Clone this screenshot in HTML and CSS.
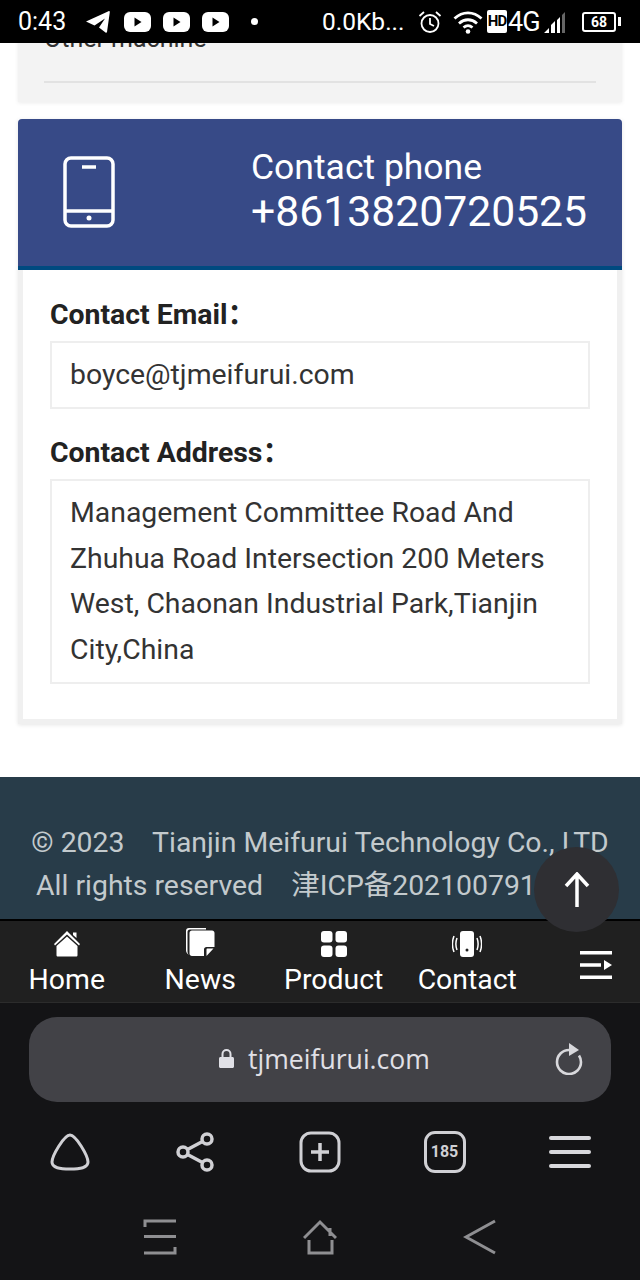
FILE: index.html
```html
<!DOCTYPE html>
<html lang="en">
  <head>
    <meta charset="UTF-8" />
    <meta name="viewport" content="width=device-width, initial-scale=1.0" />
    <link rel="stylesheet" href="styles.css">
    <title>Contact</title>
  </head>
  <body class="phone">
    <header class="status">
      <span class="status__time">0:43</span>
      <svg width="24" height="22" viewBox="0 0 24 22"><path d="M0 10.500 22.500.2c.8-.4 1.500.2 1.300 1L21 21c-.2.800-.8 1-1.500.6l-6.500-5 6-9-10.500 7z" fill="#fff"/></svg>
      <div class="status__apps">
        <svg width="27" height="20" viewBox="0 0 27 20"><rect width="27" height="20" rx="6" fill="#fff"/><path d="M10.500 5.500v9l7-4.500z" fill="#000"/></svg>
        <svg width="27" height="20" viewBox="0 0 27 20"><rect width="27" height="20" rx="6" fill="#fff"/><path d="M10.500 5.500v9l7-4.500z" fill="#000"/></svg>
        <svg width="27" height="20" viewBox="0 0 27 20"><rect width="27" height="20" rx="6" fill="#fff"/><path d="M10.500 5.500v9l7-4.500z" fill="#000"/></svg>
      </div>
      <span class="status__dot"></span>
      <span class="status__speed">0.0Kb...</span>
      <svg class="status__alarm" width="24" height="24" viewBox="0 0 24 24" fill="none" stroke="#fff" stroke-width="1.800"><circle cx="12" cy="13.500" r="8.500"/><path d="M12 8v6l4 2M1.500 6 6 2M22.500 6 18 2"/></svg>
      <svg class="status__wifi" width="30" height="24" viewBox="0 0 30 24" fill="none" stroke="#fff" stroke-width="2.800"><path d="M1.500 8.500c8-7.500 19-7.500 27 0M6 13.500c5.500-5 12.500-5 18 0M10.500 17.500c3-2.500 6-2.500 9 0"/><circle cx="15" cy="21.500" r="2.300" fill="#fff" stroke="none"/></svg>
      <span class="status__hd">HD</span>
      <span class="status__net">4G</span>
      <svg class="status__signal" width="24" height="24" viewBox="0 0 24 24"><path d="M1 23 6 18v5zM8 23v-8l4-4v12zM14 23V10l3-3v16z" fill="#fff"/><path d="M19 23V5l3-3v21z" fill="#666"/></svg>
      <div class="status__battery">
        <span class="status__battery-body">68</span>
        <span class="status__battery-cap"></span>
      </div>
    </header>

    <main class="page">
      <section class="machines">
        <p class="machines__item">Other machine</p>
      </section>

      <section class="contact">
        <div class="contact__head">
          <svg class="contact__icon" width="52" height="72" viewBox="0 0 52 72" fill="none" stroke="#fff" stroke-width="3.500"><rect x="2" y="2" width="48" height="68" rx="6"/><path d="M2 55h48M19 11h14"/><circle cx="26" cy="62" r="2.500" fill="#fff" stroke="none"/></svg>
          <div>
            <p class="contact__label">Contact phone</p>
            <p class="contact__phone">+8613820720525</p>
          </div>
        </div>
        <div class="contact__body">
          <h2 class="contact__title">Contact Email：</h2>
          <p class="contact__box">boyce@tjmeifurui.com</p>
          <h2 class="contact__title">Contact Address：</h2>
          <p class="contact__box">Management Committee Road And Zhuhua Road Intersection 200 Meters West, Chaonan Industrial Park,Tianjin City,China</p>
        </div>
      </section>

      <footer class="copyright">
        <p>© 2023 &nbsp;&nbsp; Tianjin Meifurui Technology Co., LTD</p>
        <p>All rights reserved &nbsp;&nbsp; 津ICP备2021007913号-1</p>
      </footer>
    </main>

    <div class="to-top">
      <svg width="26" height="36" viewBox="0 0 26 36" fill="none" stroke="#fff" stroke-width="3.500"><path d="M13 35V2M2 14 13 2l11 12"/></svg>
    </div>

    <nav class="site-nav">
      <a class="site-nav__item">
        <svg width="28" height="26" viewBox="0 0 28 26" fill="#fff"><path d="M14 0 27 13l-1 1.500L14 3.500 2 14.500 1 13z"/><path d="M14 5.500 24.500 15v9c0 1-.5 1.500-1.500 1.500H5c-1 0-1.500-.5-1.500-1.500v-9zM20 1.500h3.500V7L20 4z"/></svg>
        Home
      </a>
      <a class="site-nav__item">
        <svg width="30" height="30" viewBox="0 0 30 30"><path d="M4 28C1.500 26 1 25 1 23V4c0-2 1-3 3-3h17v1.500H5C3.500 2.500 2.500 3.500 2.500 5v19c0 2 .5 3 1.500 4z" fill="#fff"/><path d="M7 3.500h20c1.500 0 2.500 1 2.500 2.500v14h-8c-1.500 0-2.500 1-2.500 2.500V29H7c-1.500 0-2.500-1-2.500-2.500V6C4.500 4.500 5.500 3.500 7 3.500zM21.500 29v-6.500c0-.5.200-1 1-1h6z" fill="#fff"/></svg>
        News
      </a>
      <a class="site-nav__item">
        <svg width="26" height="26" viewBox="0 0 26 26" fill="#fff"><rect width="11.500" height="11.500" rx="3"/><rect x="14.500" width="11.500" height="11.500" rx="3"/><rect y="14.500" width="11.500" height="11.500" rx="3"/><rect x="14.500" y="14.500" width="11.500" height="11.500" rx="3"/></svg>
        Product
      </a>
      <a class="site-nav__item">
        <svg width="30" height="26" viewBox="0 0 30 26"><rect x="8" y="0" width="14" height="26" rx="3" fill="#fff"/><circle cx="15" cy="19" r="1.500" fill="#202020"/><path d="M5 7c-1.500 4-1.500 8 0 12M2 5c-2 5-2 11 0 16M25 7c1.500 4 1.500 8 0 12M28 5c2 5 2 11 0 16" fill="none" stroke="#fff" stroke-width="1.500"/></svg>
        Contact
      </a>
      <a class="site-nav__toggle">
        <svg width="32" height="28" viewBox="0 0 32 28" fill="#fff"><path d="M0 0h32v3.500H0zM0 12.300h21v3.500H0zM0 24.500h32V28H0zM24 9l8 5-8 5z"/></svg>
      </a>
    </nav>

    <div class="browser">
      <div class="browser__url">
        <svg width="15" height="20" viewBox="0 0 15 20" fill="#e0e0e6"><path d="M1.500 8h12c.8 0 1.500.7 1.500 1.500v8c0 .8-.7 1.500-1.500 1.500h-12C.7 19 0 18.300 0 17.500v-8C0 8.700.7 8 1.500 8z"/><path d="M3.500 9V5a4 4 0 0 1 8 0v4" fill="none" stroke="#e0e0e6" stroke-width="2"/></svg>
        <span class="browser__host">tjmeifurui.com</span>
        <svg class="browser__reload" width="30" height="32" viewBox="0 0 30 32" fill="none" stroke="#d8d8dc" stroke-width="2.600"><path d="M15 7a12 12 0 1 0 12 12c0-2.500-.7-4.500-2-6.500"/><path d="M15 0l10 7-10 6z" fill="#d8d8dc" stroke="none"/></svg>
      </div>
      <div class="browser__tools">
        <svg width="40" height="38" viewBox="0 0 40 38" fill="none" stroke="#d0d0d4" stroke-width="3"><path d="M20 2C26 2 38 23 38 29 38 35 30 36 20 36 10 36 2 35 2 29 2 23 14 2 20 2z"/></svg>
        <svg width="38" height="40" viewBox="0 0 38 40" fill="none" stroke="#d0d0d4" stroke-width="3.500"><circle cx="7" cy="20" r="5"/><circle cx="31" cy="7" r="5"/><circle cx="31" cy="33" r="5"/><path d="M11.500 17.500 26.500 9.500M11.500 22.500 26.500 30.500"/></svg>
        <svg width="42" height="42" viewBox="0 0 42 42" fill="none" stroke="#d0d0d4" stroke-width="3"><rect x="2" y="2" width="38" height="38" rx="10"/><path d="M21 12v18M12 21h18" stroke-width="3.500"/></svg>
        <div class="browser__tabs">185</div>
        <svg width="42" height="32" viewBox="0 0 42 32" fill="#d8d8dc"><rect width="42" height="4" rx="2"/><rect y="14" width="42" height="4" rx="2"/><rect y="28" width="42" height="4" rx="2"/></svg>
      </div>
      <div class="browser__system">
        <svg width="34" height="36" viewBox="0 0 34 36" fill="none" stroke="#8f8f92" stroke-width="3"><path d="M2 8V2h31M1 17.500h32M1 34h31v-6"/></svg>
        <svg width="34" height="36" viewBox="0 0 34 36" fill="none" stroke="#8f8f92" stroke-width="3"><path d="M1 19 17 3l16 16M27 9v8M6 21v13h23V21"/></svg>
        <svg width="34" height="36" viewBox="0 0 34 36" fill="none" stroke="#8f8f92" stroke-width="3"><path d="M32 2 3 18l29 16"/></svg>
      </div>
    </div>
  </body>
</html>
```

FILE: styles.css
```css
* {
  box-sizing: border-box;
}
p,
h2 {
  margin: 0;
}
.phone {
  margin: 0;
  width: 640px;
  height: 1280px;
  overflow: hidden;
  position: relative;
  display: flex;
  flex-direction: column;
  font-family: Roboto, "Noto Sans CJK SC", sans-serif;
  background: #fff;
}
.status {
  height: 43px;
  flex: none;
  background: #000;
  color: #fff;
  display: flex;
  align-items: center;
  padding-left: 18px;
}
.status__time {
  font-size: 25px;
  width: 68px;
}
.status__apps {
  display: flex;
  gap: 12px;
  margin-left: 14px;
}
.status__dot {
  width: 7px;
  height: 7px;
  border-radius: 50%;
  background: #fff;
  margin-left: 22px;
}
.status__speed {
  font-size: 24.500px;
  margin-left: 64px;
  width: 82px;
  white-space: nowrap;
}
.status__alarm {
  margin-left: 14px;
}
.status__wifi {
  margin-left: 11px;
}
.status__hd {
  background: #fff;
  color: #000;
  font-size: 15px;
  font-weight: 700;
  width: 20px;
  height: 23px;
  line-height: 23px;
  text-align: center;
  border-radius: 2px;
  margin-left: 4px;
  letter-spacing: -1px;
}
.status__net {
  font-size: 27px;
  width: 34px;
  margin-left: 1px;
  letter-spacing: -1px;
}
.status__signal {
  margin-left: 1px;
}
.status__battery {
  display: flex;
  align-items: center;
  gap: 2px;
  margin-left: 15px;
}
.status__battery-body {
  width: 34px;
  height: 20px;
  border: 2px solid #fff;
  border-radius: 3px;
  font-size: 14px;
  font-weight: 700;
  line-height: 16px;
  text-align: center;
}
.status__battery-cap {
  width: 3px;
  height: 9px;
  background: #fff;
}

.page {
  height: 876px;
  flex: none;
  overflow: hidden;
}
.machines {
  margin: -20px 18px 0;
  height: 79px;
  padding: 0 26px;
  background: #f3f3f3;
  box-shadow: 0 1px 4px rgba(0, 0, 0, 0.08);
}
.machines__item {
  font-size: 25px;
  line-height: 32px;
  height: 60px;
  color: #333;
  border-bottom: 2px solid #e2e2e2;
}
.contact {
  margin: 17px 18px 0;
  box-shadow: 0 1px 4px rgba(0, 0, 0, 0.1);
}
.contact__head {
  height: 151px;
  padding-bottom: 3px;
  background: #374a87;
  border-bottom: 4px solid #004a80;
  border-radius: 4px 4px 0 0;
  display: flex;
  align-items: center;
  color: #fff;
}
.contact__icon {
  flex: none;
  margin: 2px 136px 0 45px;
}
.contact__label {
  font-size: 35.500px;
  line-height: 40px;
}
.contact__phone {
  font-size: 42.700px;
  line-height: 48px;
}
.contact__body {
  border: 5px solid #f0f0f0;
  border-top: 0;
  padding: 28px 27px 35px;
  background: #fff;
}
.contact__title {
  font-size: 28.400px;
  font-weight: 700;
  line-height: 34px;
  color: #222;
  margin-bottom: 9px;
}
.contact__box {
  border: 2px solid #eee;
  padding: 9px 18px;
  font-size: 28.400px;
  line-height: 45.800px;
  color: #333;
  margin-bottom: 27px;
}
.contact__box:last-child {
  margin-bottom: 0;
}
.copyright {
  margin-top: 53.500px;
  height: 142px;
  padding-top: 44px;
  background: #283c49;
  color: #c3cacd;
  font-size: 28.400px;
  line-height: 43px;
  text-align: center;
  white-space: nowrap;
}
.to-top {
  position: absolute;
  left: 534px;
  top: 847px;
  width: 85px;
  height: 85px;
  border-radius: 50%;
  background: #2f2f33;
  display: flex;
  align-items: center;
  justify-content: center;
}

.site-nav {
  height: 84px;
  flex: none;
  background: #202020;
  border-top: 2px solid #000;
  border-bottom: 1px solid #2c2c2c;
  display: grid;
  grid-template-columns: repeat(4, 133.500px) 106px;
  color: #fff;
}
.site-nav__item {
  display: flex;
  flex-direction: column;
  align-items: center;
  justify-content: flex-end;
  font-size: 28.400px;
  line-height: 38px;
  padding-bottom: 3px;
  gap: 4px;
}
.site-nav__toggle {
  display: flex;
  align-items: center;
  justify-content: center;
  padding: 6px 0 0 18px;
}

.browser {
  flex: 1;
  background: #141416;
  padding-top: 14px;
}
.browser__url {
  margin: 0 29px;
  height: 85px;
  background: #424247;
  border-radius: 28px;
  display: flex;
  align-items: center;
  padding: 0 0 2px 190px;
  color: #e0e0e6;
}
.browser__host {
  font-family: "Open Sans", sans-serif;
  font-size: 26.600px;
  margin-left: 14px;
}
.browser__reload {
  margin-left: auto;
  margin-right: 27px;
}
.browser__tools {
  display: grid;
  grid-template-columns: repeat(5, 125px);
  justify-items: center;
  align-items: center;
  padding-left: 7px;
  height: 100px;
}
.browser__tabs {
  width: 42px;
  height: 42px;
  border: 3px solid #d0d0d4;
  border-radius: 11px;
  color: #d0d0d4;
  font-size: 16px;
  font-weight: 700;
  line-height: 36px;
  text-align: center;
}
.browser__system {
  display: grid;
  grid-template-columns: repeat(3, 160px);
  justify-content: center;
  justify-items: center;
  margin-top: 17px;
}
```
